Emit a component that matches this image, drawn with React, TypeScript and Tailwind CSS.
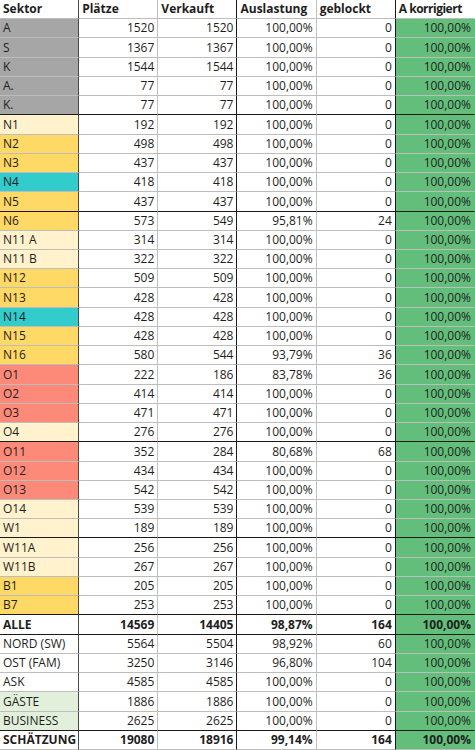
import React from "react";

type Row = {
  s: string;
  p: string;
  v: string;
  a: string;
  g: string;
  k: string;
  fill: string;
  bold?: boolean;
  dark?: boolean; // dark bottom border
};

const GRAY = "bg-[#a6a6a6]";
const LY = "bg-[#fff2cc]";
const GOLD = "bg-[#ffd966]";
const TEAL = "bg-[#33cccc]";
const SAL = "bg-[#fd8a78]";
const LG = "bg-[#e2efda]";
const W = "bg-white";

const rows: Row[] = [
  { s: "A", p: "1520", v: "1520", a: "100,00%", g: "0", k: "100,00%", fill: GRAY },
  { s: "S", p: "1367", v: "1367", a: "100,00%", g: "0", k: "100,00%", fill: GRAY },
  { s: "K", p: "1544", v: "1544", a: "100,00%", g: "0", k: "100,00%", fill: GRAY },
  { s: "A.", p: "77", v: "77", a: "100,00%", g: "0", k: "100,00%", fill: GRAY },
  { s: "K.", p: "77", v: "77", a: "100,00%", g: "0", k: "100,00%", fill: GRAY, dark: true },
  { s: "N1", p: "192", v: "192", a: "100,00%", g: "0", k: "100,00%", fill: LY },
  { s: "N2", p: "498", v: "498", a: "100,00%", g: "0", k: "100,00%", fill: GOLD },
  { s: "N3", p: "437", v: "437", a: "100,00%", g: "0", k: "100,00%", fill: GOLD },
  { s: "N4", p: "418", v: "418", a: "100,00%", g: "0", k: "100,00%", fill: TEAL },
  { s: "N5", p: "437", v: "437", a: "100,00%", g: "0", k: "100,00%", fill: GOLD, dark: true },
  { s: "N6", p: "573", v: "549", a: "95,81%", g: "24", k: "100,00%", fill: GOLD },
  { s: "N11 A", p: "314", v: "314", a: "100,00%", g: "0", k: "100,00%", fill: LY },
  { s: "N11 B", p: "322", v: "322", a: "100,00%", g: "0", k: "100,00%", fill: LY },
  { s: "N12", p: "509", v: "509", a: "100,00%", g: "0", k: "100,00%", fill: GOLD },
  { s: "N13", p: "428", v: "428", a: "100,00%", g: "0", k: "100,00%", fill: GOLD },
  { s: "N14", p: "428", v: "428", a: "100,00%", g: "0", k: "100,00%", fill: TEAL },
  { s: "N15", p: "428", v: "428", a: "100,00%", g: "0", k: "100,00%", fill: GOLD },
  { s: "N16", p: "580", v: "544", a: "93,79%", g: "36", k: "100,00%", fill: GOLD },
  { s: "O1", p: "222", v: "186", a: "83,78%", g: "36", k: "100,00%", fill: SAL },
  { s: "O2", p: "414", v: "414", a: "100,00%", g: "0", k: "100,00%", fill: SAL },
  { s: "O3", p: "471", v: "471", a: "100,00%", g: "0", k: "100,00%", fill: SAL },
  { s: "O4", p: "276", v: "276", a: "100,00%", g: "0", k: "100,00%", fill: LY, dark: true },
  { s: "O11", p: "352", v: "284", a: "80,68%", g: "68", k: "100,00%", fill: SAL },
  { s: "O12", p: "434", v: "434", a: "100,00%", g: "0", k: "100,00%", fill: SAL },
  { s: "O13", p: "542", v: "542", a: "100,00%", g: "0", k: "100,00%", fill: SAL },
  { s: "O14", p: "539", v: "539", a: "100,00%", g: "0", k: "100,00%", fill: LY },
  { s: "W1", p: "189", v: "189", a: "100,00%", g: "0", k: "100,00%", fill: LY, dark: true },
  { s: "W11A", p: "256", v: "256", a: "100,00%", g: "0", k: "100,00%", fill: LY },
  { s: "W11B", p: "267", v: "267", a: "100,00%", g: "0", k: "100,00%", fill: LY },
  { s: "B1", p: "205", v: "205", a: "100,00%", g: "0", k: "100,00%", fill: GOLD },
  { s: "B7", p: "253", v: "253", a: "100,00%", g: "0", k: "100,00%", fill: GOLD, dark: true },
  { s: "ALLE", p: "14569", v: "14405", a: "98,87%", g: "164", k: "100,00%", fill: W, bold: true, dark: true },
  { s: "NORD (SW)", p: "5564", v: "5504", a: "98,92%", g: "60", k: "100,00%", fill: W },
  { s: "OST (FAM)", p: "3250", v: "3146", a: "96,80%", g: "104", k: "100,00%", fill: W },
  { s: "ASK", p: "4585", v: "4585", a: "100,00%", g: "0", k: "100,00%", fill: W },
  { s: "GÄSTE", p: "1886", v: "1886", a: "100,00%", g: "0", k: "100,00%", fill: LG },
  { s: "BUSINESS", p: "2625", v: "2625", a: "100,00%", g: "0", k: "100,00%", fill: LG, dark: true },
  { s: "SCHÄTZUNG", p: "19080", v: "18916", a: "99,14%", g: "164", k: "100,00%", fill: W, bold: true },
];

const rightBorders = [
  "border-r-[#4a4a4a]",
  "border-r-[#c0c0c0]",
  "border-r-[#1a1a1a]",
  "border-r-[#c0c0c0]",
  "border-r-[#1a1a1a]",
  "border-r-transparent",
];

function Cell({
  children,
  col,
  fill,
  right,
  bold,
  dark,
  tight,
}: {
  children: React.ReactNode;
  col: number;
  fill: string;
  right?: boolean;
  bold?: boolean;
  dark?: boolean;
  tight?: boolean;
}) {
  return (
    <div
      className={[
        "flex items-end overflow-hidden whitespace-nowrap border-r border-b px-[3px] leading-[16px] pb-[1px]",
        rightBorders[col],
        dark ? "border-b-[#1a1a1a]" : "border-b-[#bdbdbd]",
        fill,
        right ? "justify-end" : "justify-start",
        bold ? "font-bold" : "font-normal",
        tight ? "tracking-[-0.5px]" : "",
      ].join(" ")}
    >
      {children}
    </div>
  );
}

export default function App() {
  const headers = ["Sektor", "Plätze", "Verkauft", "Auslastung", "geblockt", "A korrigiert"];
  return (
    <div
      className="grid h-[750px] w-[475px] grid-cols-6 grid-rows-[repeat(39,minmax(0,1fr))] bg-white text-[12px] text-[#1e1e1e]"
      style={{ fontFamily: '"Open Sans", "Noto Sans", sans-serif' }}
    >
      {headers.map((h, i) => (
        <Cell key={h} col={i} fill="bg-white" bold tight={i === 5}>
          {h}
        </Cell>
      ))}
      {rows.map((r) => (
        <React.Fragment key={r.s}>
          <Cell col={0} fill={r.fill} bold={r.bold} dark={r.dark}>
            {r.s}
          </Cell>
          <Cell col={1} fill="bg-white" right bold={r.bold} dark={r.dark}>
            {r.p}
          </Cell>
          <Cell col={2} fill="bg-white" right bold={r.bold} dark={r.dark}>
            {r.v}
          </Cell>
          <Cell col={3} fill="bg-white" right bold={r.bold} dark={r.dark}>
            {r.a}
          </Cell>
          <Cell col={4} fill="bg-white" right bold={r.bold} dark={r.dark}>
            {r.g}
          </Cell>
          <Cell col={5} fill="bg-[#63be7b]" right bold={r.bold} dark={r.dark}>
            {r.k}
          </Cell>
        </React.Fragment>
      ))}
    </div>
  );
}
